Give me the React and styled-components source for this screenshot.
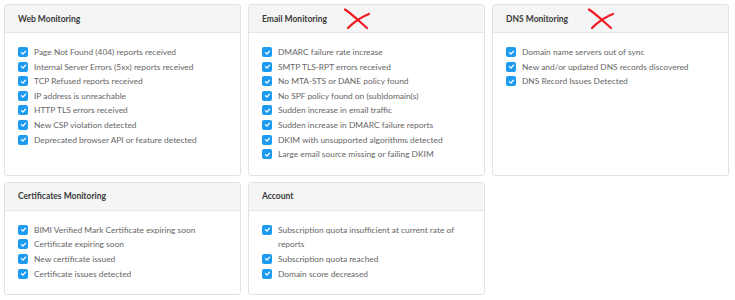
import React from 'react';
import styled, { createGlobalStyle } from 'styled-components';

const GlobalStyle = createGlobalStyle`
    body {
        margin: 0;
        background: #fff;
        font-family: Lato, "Open Sans", sans-serif;
    }
`;

const sections = [
    {
        title: 'Web Monitoring',
        items: [
            'Page Not Found (404) reports received',
            'Internal Server Errors (5xx) reports received',
            'TCP Refused reports received',
            'IP address is unreachable',
            'HTTP TLS errors received',
            'New CSP violation detected',
            'Deprecated browser API or feature detected',
        ],
    },
    {
        title: 'Email Monitoring',
        crossed: true,
        items: [
            'DMARC failure rate increase',
            'SMTP TLS-RPT errors received',
            'No MTA-STS or DANE policy found',
            'No SPF policy found on (sub)domain(s)',
            'Sudden increase in email traffic',
            'Sudden increase in DMARC failure reports',
            'DKIM with unsupported algorithms detected',
            'Large email source missing or failing DKIM',
        ],
    },
    {
        title: 'DNS Monitoring',
        crossed: true,
        items: [
            'Domain name servers out of sync',
            'New and/or updated DNS records discovered',
            'DNS Record Issues Detected',
        ],
    },
    {
        title: 'Certificates Monitoring',
        items: [
            'BIMI Verified Mark Certificate expiring soon',
            'Certificate expiring soon',
            'New certificate issued',
            'Certificate issues detected',
        ],
    },
    {
        title: 'Account',
        items: [
            'Subscription quota insufficient at current rate of reports',
            'Subscription quota reached',
            'Domain score decreased',
        ],
    },
];

const Check = () => (
    <Box>
        <svg width="7" height="7" viewBox="0 0 10 10">
            <path d="M2 5.2 L4.2 7.2 L8 3" fill="none" stroke="#fff" strokeWidth="1.8" strokeLinecap="round" strokeLinejoin="round" />
        </svg>
    </Box>
);

const Cross = () => (
    <CrossMark width="28" height="22" viewBox="0 0 28 22">
        <path d="M2 1.5 C9 6, 16 13, 24 20" fill="none" stroke="#ee1c24" strokeWidth="2.2" strokeLinecap="round" />
        <path d="M5 20 C11 14, 18 9, 26 6" fill="none" stroke="#ee1c24" strokeWidth="2.2" strokeLinecap="round" />
    </CrossMark>
);

const App = () => {
    return (
        <Page>
            <GlobalStyle />
            {sections.map(s => (
                <Card key={s.title}>
                    <Header>
                        {s.title}
                        {s.crossed && <Cross />}
                    </Header>
                    <List>
                        {s.items.map(item => (
                            <Item key={item}>
                                <Check />
                                <span>{item}</span>
                            </Item>
                        ))}
                    </List>
                </Card>
            ))}
        </Page>
    );
};

const Page = styled.div`
    display: grid;
    grid-template-columns: repeat(3, 237px);
    column-gap: 7px;
    row-gap: 6px;
    padding: 4px 6px 0 4px;
`;

const Card = styled.div`
    border: 1px solid #e2e2e2;
    border-radius: 3px;
    background: #fff;
    overflow: hidden;
`;

const Header = styled.div`
    position: relative;
    height: 28px;
    box-sizing: border-box;
    padding: 0 13px;
    display: flex;
    align-items: center;
    background: #f5f5f5;
    border-bottom: 1px solid #e6e6e6;
    font-size: 8.5px;
    font-weight: 700;
    color: #3a3a3a;
`;

const CrossMark = styled.svg`
    position: absolute;
    left: 94px;
    top: 3px;
`;

const List = styled.ul`
    list-style: none;
    margin: 0;
    padding: 12px 13px 13px 13px;
`;

const Item = styled.li`
    display: flex;
    align-items: flex-start;
    gap: 6px;
    font-size: 8.4px;
    line-height: 14.6px;
    color: #666;
    padding-right: 8px;
`;

const Box = styled.span`
    flex: none;
    width: 10px;
    height: 10px;
    margin-top: 2px;
    border-radius: 2px;
    background: #1d9bf0;
    display: flex;
    align-items: center;
    justify-content: center;
`;

export default App;
